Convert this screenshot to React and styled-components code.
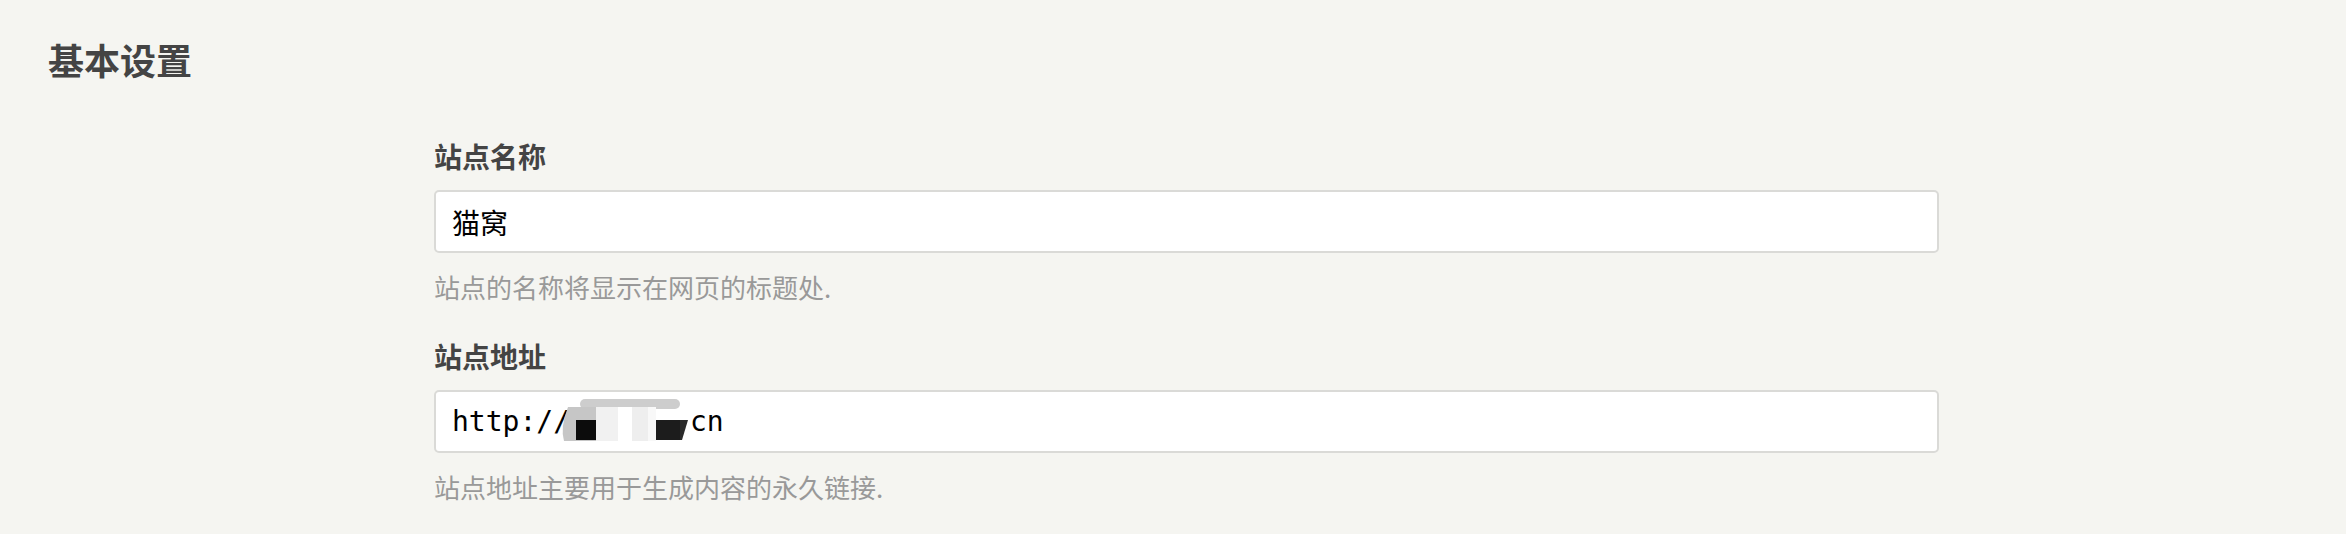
import React from 'react'
import styled, { createGlobalStyle } from 'styled-components'

const GlobalStyle = createGlobalStyle`
  html, body {
    margin: 0;
    padding: 0;
    background: #f5f5f1;
  }
  body {
    font-family: "Noto Sans CJK SC", "Noto Sans", sans-serif;
  }
`

const Page = styled.main`
  min-height: 534px;
  padding: 32px 48px 0 48px;
  box-sizing: border-box;
  background: #f5f5f1;
`

const Titulo = styled.h2`
  margin: 0;
  font-size: 36px;
  line-height: 54px;
  font-weight: 700;
  color: #444;
`

const Form = styled.section`
  width: 1505px;
  margin: 50px 0 0 386px;
  display: flex;
  flex-direction: column;
  gap: 29px;
`

const Field = styled.div`
  display: flex;
  flex-direction: column;
`

const Label = styled.label`
  font-size: 28px;
  line-height: 40px;
  font-weight: 700;
  color: #444;
`

const TextBox = styled.div`
  margin-top: 14px;
  height: 63px;
  box-sizing: border-box;
  border: 2px solid #dadad7;
  border-radius: 5px;
  background: #fff;
  padding: 0 16px;
  display: flex;
  align-items: center;
  font-family: "DejaVu Sans Mono", "Noto Sans CJK SC", monospace;
  font-size: 28px;
  color: #000;
  white-space: pre;
`

const Hint = styled.p`
  margin: 14px 0 0 0;
  font-size: 26px;
  line-height: 40px;
  color: #999;
`

// pixelated cover over the hidden part of the address
const Redacted = () => (
  <svg width="136" height="46" viewBox="0 0 136 46" style={{ display: 'block', marginTop: '-4px', marginLeft: '-16px' }}>
    <rect x="26" y="2" width="100" height="10" rx="5" fill="#cdcdcd" />
    <path d="M14 10 H42 V44 H10 Q6 30 14 10 Z" fill="#c6c6c6" />
    <rect x="22" y="23" width="20" height="20" fill="#0c0c0c" />
    <rect x="42" y="10" width="22" height="34" fill="#f1f1f1" />
    <rect x="64" y="10" width="14" height="34" fill="#ffffff" />
    <rect x="78" y="10" width="16" height="34" fill="#eeeeee" />
    <rect x="94" y="10" width="8" height="34" fill="#f8f8f8" />
    <rect x="102" y="23" width="24" height="20" fill="#1c1c1c" />
    <path d="M126 23 H134 L128 43 H126 Z" fill="#2a2a2a" />
  </svg>
)

const campos = [
  { label: '站点名称', value: '猫窝', hint: '站点的名称将显示在网页的标题处.' },
  { label: '站点地址', value: null, hint: '站点地址主要用于生成内容的永久链接.' },
]

const App = () => {
  return (
    <Page>
      <GlobalStyle />
      <Titulo>基本设置</Titulo>
      <Form>
        {campos.map((c) => (
          <Field key={c.label}>
            <Label>{c.label}</Label>
            <TextBox>
              {c.value !== null ? c.value : (
                <>
                  <span>http://</span>
                  <Redacted />
                  <span>cn</span>
                </>
              )}
            </TextBox>
            <Hint>{c.hint}</Hint>
          </Field>
        ))}
      </Form>
    </Page>
  )
}

export default App
